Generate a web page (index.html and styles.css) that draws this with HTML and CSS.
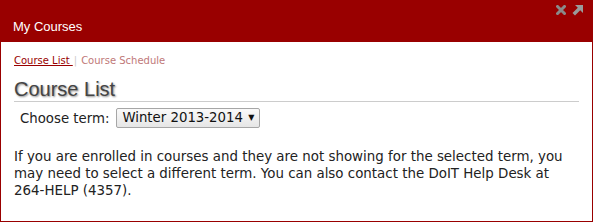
FILE: index.html
```html
<!DOCTYPE html>
<html>
<head>
<meta charset="utf-8">
<link rel="stylesheet" href="styles.css">
</head>
<body>
<div class="portlet">
  <div class="header">
    <div class="title">My Courses</div>
    <div class="controls">
      <svg class="icon" width="10" height="10" viewBox="0 0 10 10"><path d="M1.5 1.5 L8.5 8.5 M8.5 1.5 L1.5 8.5" stroke="#8a8a8a" stroke-width="3" stroke-linecap="square"/></svg>
      <svg class="icon" width="11" height="11" viewBox="0 0 11 11"><path d="M3 0 H11 V8 L8.2 5.2 L3 10.5 L0.5 8 L5.8 2.8 Z" fill="#9a9a9a"/></svg>
    </div>
  </div>
  <div class="content">
    <div class="tabs"><a class="tab active" href="#">Course List </a><span class="sep">|</span><a class="tab" href="#">Course Schedule</a></div>
    <h2 class="heading">Course List</h2>
    <div class="term">
      <label class="term-label">Choose term:</label>
      <div class="select">Winter 2013-2014 <span class="caret">▼</span></div>
    </div>
    <p class="note">If you are enrolled in courses and they are not showing for the selected term, you may need to select a different term. You can also contact the DoIT Help Desk at 264-HELP (4357).</p>
  </div>
</div>
</body>
</html>
```
FILE: styles.css
```css
html, body { margin: 0; padding: 0; background: #fff; }
.portlet {
  width: 593px;
  height: 222px;
  box-sizing: border-box;
  border: 1px solid #990000;
  border-top: none;
  display: flex;
  flex-direction: column;
}
.header {
  background: #990000;
  height: 42px;
  margin: 0 -1px;
  display: flex;
  justify-content: space-between;
  align-items: flex-start;
  flex-shrink: 0;
}
.title {
  font-family: "Liberation Sans", Arial, sans-serif;
  font-size: 13px;
  color: #fff;
  padding: 19px 0 0 13px;
  line-height: 15px;
}
.controls {
  display: flex;
  gap: 6px;
  padding: 5px 10px 0 0;
}
.content {
  padding: 12px 13px 0 13px;
  font-family: "DejaVu Sans", Verdana, sans-serif;
}
.tabs { font-size: 10px; line-height: 13px; }
.tab { text-decoration: none; color: #c07878; }
.tab.active { color: #990000; text-decoration: underline; }
.sep { color: #ccc; margin: 0 4px 0 1px; }
.heading {
  font-family: "Liberation Sans", Arial, sans-serif;
  font-weight: normal;
  font-size: 20px;
  color: #444;
  text-shadow: 1px 1px 2px #888;
  margin: 11px 0 0 0;
  padding-bottom: 1px;
  line-height: 22px;
  border-bottom: 1px solid #ccc;
}
.term {
  display: flex;
  align-items: center;
  gap: 7px;
  padding: 6px 0 0 6px;
  font-size: 13.3px;
  color: #222;
}
.select {
  border: 1px solid #a6a6a6;
  border-radius: 2px;
  background: linear-gradient(#fafafa, #e6e6e6);
  height: 18px;
  line-height: 18px;
  padding: 0 5px 0 5px;
  color: #111;
}
.caret { font-size: 8px; vertical-align: 2px; margin-left: 1px; }
.note {
  margin: 20px 0 0 0;
  font-size: 13.4px;
  line-height: 17px;
  color: #222;
}
```
